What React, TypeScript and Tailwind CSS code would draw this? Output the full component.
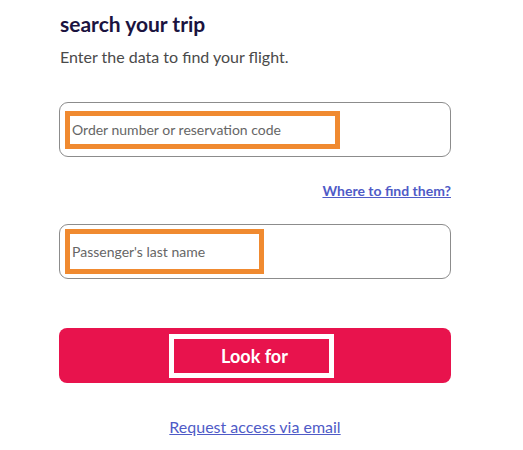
export default function App() {
  return (
    <div className="w-[523px] h-[450px] bg-white font-['Lato',sans-serif] overflow-hidden">
      <div className="ml-[59px] w-[392px] flex flex-col">
        <h1 className="mt-[11px] text-[21px] leading-[1.2] font-bold text-[#1b1340] pl-px">
          search your trip
        </h1>
        <p className="mt-[11px] text-[16px] leading-[1.2] text-[#4a4a4a] pl-px">
          Enter the data to find your flight.
        </p>

        {/* Order number */}
        <div className="mt-[36px] h-[55px] rounded-[9px] border border-[#8c8c8c] flex items-center pl-[5px]">
          <span className="w-[275px] h-[38px] border-[5px] border-[#f08a30] flex items-center pl-[2px] text-[14px] text-[#666666]">
            Order number or reservation code
          </span>
        </div>

        <a
          href="#"
          className="mt-[26px] self-end text-[14px] leading-[1.2] font-bold text-[#4f5bc7] underline"
        >
          Where to find them?
        </a>

        {/* Last name */}
        <div className="mt-[24px] h-[55px] rounded-[9px] border border-[#8c8c8c] flex items-center pl-[5px]">
          <span className="w-[199px] h-[45px] border-[5px] border-[#f08a30] flex items-center pl-[2px] text-[14px] text-[#666666]">
            Passenger's last name
          </span>
        </div>

        <button className="mt-[49px] h-[55px] rounded-[8px] bg-[#e8134d] flex items-center justify-center pr-[7px]">
          <span className="w-[165px] h-[44px] border-[5px] border-white flex items-center justify-center pl-[6px] pt-px text-[18px] font-bold text-white">
            Look for
          </span>
        </button>

        <a
          href="#"
          className="mt-[34px] self-center text-[16px] leading-[1.2] text-[#4f5bc7] underline"
        >
          Request access via email
        </a>
      </div>
    </div>
  );
}
